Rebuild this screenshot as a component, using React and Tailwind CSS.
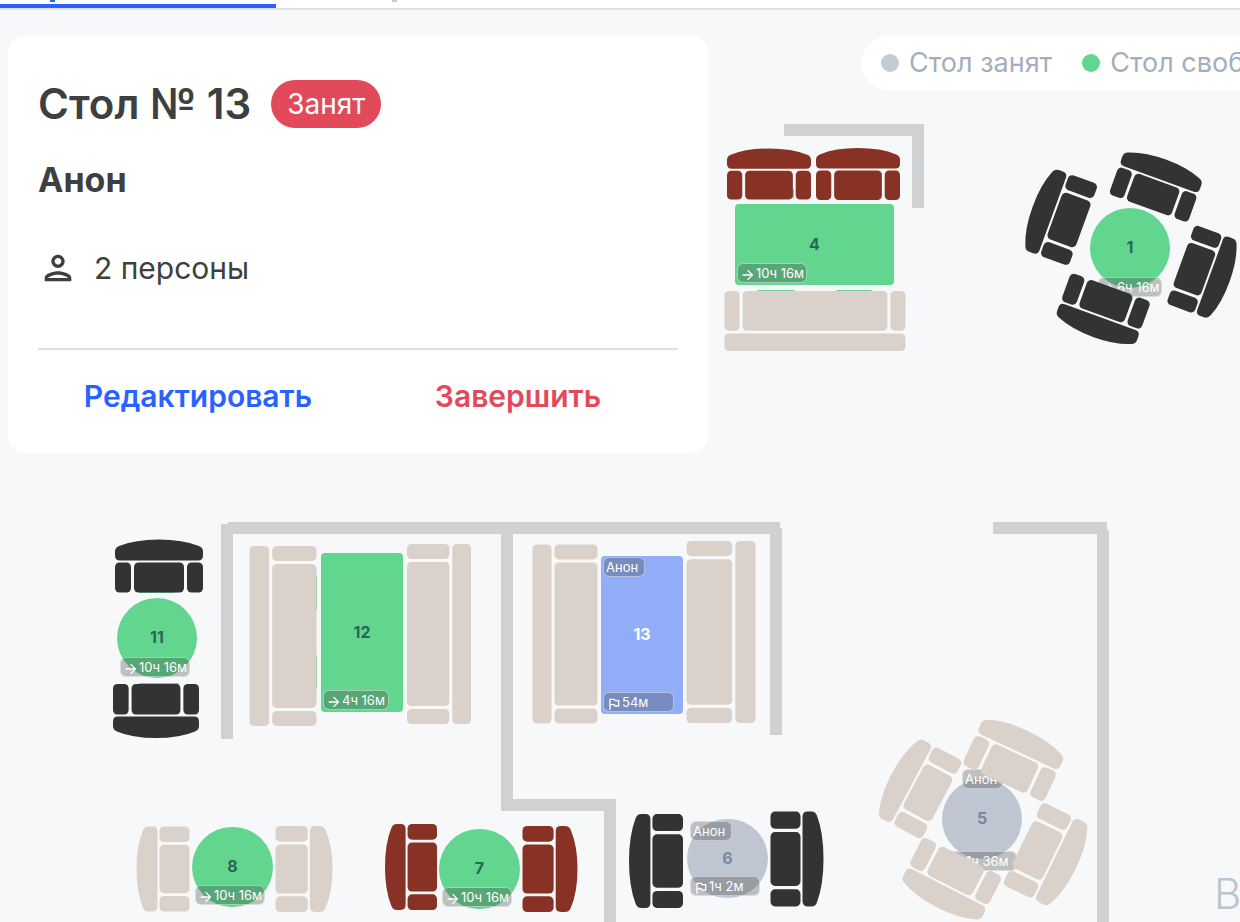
import React from "react";
import { MdArrowForward, MdOutlinedFlag, MdOutlinePerson } from "react-icons/md";

const BROWN = "#883225";
const DARK = "#333333";
const BEIGE = "#dad1cb";

const walls = [
  [784, 124, 140, 12],
  [912, 124, 12, 84],
  [221, 524, 12, 215],
  [228, 522, 552, 12],
  [501, 533, 12, 277],
  [501, 799, 115, 12],
  [604, 799, 12, 400],
  [770, 528, 12, 207],
  [993, 522, 114, 12],
  [1097, 530, 12, 700],
];

// places that peek out from under the furniture
const seats = [
  [785, 189, 9, 9],
  [757, 290, 38, 4],
  [836, 290, 36, 4],
  [139, 588, 36, 5],
  [139, 683, 40, 5],
  [310, 575, 7, 35],
  [310, 655, 7, 34],
  [407, 575, 7, 35],
  [407, 655, 7, 34],
];

const chairs = [
  { cx: 769, cy: 174, w: 84, h: 51, r: 0, color: BROWN },
  { cx: 858, cy: 174, w: 84, h: 52, r: 0, color: BROWN },
  { cx: 1157, cy: 184, w: 84, h: 52, r: 20, color: DARK },
  { cx: 1205, cy: 273, w: 84, h: 52, r: 110, color: DARK },
  { cx: 1102, cy: 312, w: 85, h: 53, r: 200, color: DARK },
  { cx: 1058, cy: 216, w: 87, h: 54, r: 290, color: DARK },
  { cx: 159, cy: 566, w: 88, h: 53, r: 0, color: DARK },
  { cx: 156, cy: 711, w: 86, h: 54, r: 180, color: DARK },
  { cx: 163, cy: 869, w: 85, h: 53, r: 270, color: BEIGE },
  { cx: 304, cy: 869, w: 86, h: 57, r: 90, color: BEIGE },
  { cx: 411, cy: 867, w: 86, h: 52, r: 270, color: BROWN },
  { cx: 550, cy: 869, w: 86, h: 55, r: 90, color: BROWN },
  { cx: 656, cy: 861, w: 94, h: 54, r: 270, color: DARK },
  { cx: 797, cy: 859, w: 95, h: 53, r: 90, color: DARK },
  { cx: 1015, cy: 757, w: 90, h: 58, r: 25, color: BEIGE },
  { cx: 1049, cy: 856, w: 92, h: 59, r: 116, color: BEIGE },
  { cx: 950, cy: 882, w: 89, h: 57, r: 207, color: BEIGE },
  { cx: 917, cy: 787, w: 89, h: 57, r: 298, color: BEIGE },
];

const sofas = [
  { cx: 815, cy: 321, w: 181, h: 60, r: 180 },
  { cx: 283, cy: 636, w: 180, h: 67, r: 270 },
  { cx: 439, cy: 634, w: 180, h: 64, r: 90 },
  { cx: 565, cy: 634, w: 179, h: 65, r: 270 },
  { cx: 721, cy: 632, w: 182, h: 69, r: 90 },
];

const tables = [
  { id: 4, x: 735, y: 204, w: 159, h: 81, status: "free", time: { text: "10ч 16м", x: 2, y: 59, w: 70 } },
  { id: 1, x: 1090, y: 208, w: 80, h: 80, round: true, status: "free", time: { text: "6ч 16м", x: 8, y: 69, w: 64 } },
  { id: 11, x: 117, y: 598, w: 80, h: 80, round: true, status: "free", time: { text: "10ч 16м", x: 3, y: 59, w: 70 } },
  { id: 12, x: 321, y: 553, w: 82, h: 159, status: "free", time: { text: "4ч 16м", x: 2, y: 137, w: 66 } },
  {
    id: 13, x: 601, y: 556, w: 82, h: 158, status: "active",
    guest: { text: "Анон", x: 2, y: 1, w: 42 },
    time: { text: "54м", flag: true, x: 2, y: 136, w: 71 },
  },
  { id: 8, x: 192, y: 827, w: 81, h: 80, round: true, status: "free", time: { text: "10ч 16м", x: 3, y: 58, w: 70 } },
  { id: 7, x: 439, y: 829, w: 81, h: 80, round: true, status: "free", time: { text: "10ч 16м", x: 3, y: 58, w: 70 } },
  {
    id: 6, x: 687, y: 819, w: 81, h: 79, round: true, status: "busy",
    guest: { text: "Анон", x: 3, y: 2, w: 42 },
    time: { text: "1ч 2м", flag: true, x: 3, y: 57, w: 70 },
  },
  {
    id: 5, x: 942, y: 779, w: 80, h: 80, round: true, status: "busy",
    guest: { text: "Анон", x: 20, y: -10, w: 41 },
    time: { text: "1ч 36м", flag: true, x: 5, y: 72, w: 70 },
  },
];

const statusStyles = {
  free: "bg-[#62d68f] text-[#276658]",
  busy: "bg-[#bfc6d1] text-[#7788a0]",
  active: "bg-[#91adf8] text-white",
};

function place({ cx, cy, w, h, r }, bw, bh) {
  return `translate(${cx} ${cy}) rotate(${r}) scale(${w / bw} ${h / bh}) translate(${-bw / 2} ${-bh / 2})`;
}

function Chair(props) {
  return (
    <g transform={place(props, 88, 53)} fill={props.color}>
      <path d="M0 16V12Q0 8 4 6.500Q20 0 44 0T84 6.500Q88 8 88 12V16Q88 21 83 21H5Q0 21 0 16Z" />
      <rect x="0" y="23" width="16" height="30" rx="4.500" />
      <rect x="19" y="23" width="50" height="30" rx="4.500" />
      <rect x="72" y="23" width="16" height="30" rx="4.500" />
    </g>
  );
}

function Sofa(props) {
  return (
    <g transform={place(props, 180, 65)} fill={BEIGE}>
      <rect x="0" y="0" width="180" height="19" rx="4.500" />
      <rect x="0" y="22" width="15" height="43" rx="4.500" />
      <rect x="18" y="22" width="144" height="43" rx="4.500" />
      <rect x="165" y="22" width="15" height="43" rx="4.500" />
    </g>
  );
}

function Tag({ tag, children }) {
  return (
    <span
      className="absolute flex h-5 items-center rounded-md border border-white/45 bg-[#424242]/31 pl-0.5 text-[13px] leading-4 font-normal whitespace-nowrap text-white"
      style={{ left: tag.x, top: tag.y, width: tag.w }}
    >
      {children}
      {tag.text}
    </span>
  );
}

function Table({ table }) {
  const { id, x, y, w, h, round, status, guest, time } = table;
  return (
    <button
      type="button"
      className={`absolute flex items-center justify-center pb-0.5 text-[16px] leading-5 font-bold ${
        round ? "rounded-full" : "rounded-sm"
      } ${statusStyles[status]}`}
      style={{ left: x, top: y, width: w, height: h }}
    >
      {id}
      {guest && <Tag tag={guest} />}
      <Tag tag={time}>
        {time.flag ? (
          <MdOutlinedFlag className="mt-1 size-4 shrink-0" />
        ) : (
          <MdArrowForward className="mt-1 size-4 shrink-0" />
        )}
      </Tag>
    </button>
  );
}

function FloorPlan() {
  return (
    <section className="absolute inset-0 overflow-hidden" aria-label="План зала">
      <svg className="absolute inset-0 size-full" aria-hidden="true">
        {walls.map(([x, y, w, h]) => (
          <rect key={`${x}-${y}-${w}`} x={x} y={y} width={w} height={h} fill="#cfd1d3" />
        ))}
        {seats.map(([x, y, w, h]) => (
          <rect key={`${x}-${y}`} x={x} y={y} width={w} height={h} rx="1" fill="#62d68f" />
        ))}
      </svg>
      {tables.map((table) => (
        <Table key={table.id} table={table} />
      ))}
      <svg className="pointer-events-none absolute inset-0 size-full" aria-hidden="true">
        {chairs.map((chair) => (
          <Chair key={`${chair.cx}-${chair.cy}`} {...chair} />
        ))}
        {sofas.map((sofa) => (
          <Sofa key={`${sofa.cx}-${sofa.cy}`} {...sofa} />
        ))}
      </svg>
      <span className="absolute top-[866px] left-[1214px] text-[42px] leading-14 font-light whitespace-nowrap text-[#bcc4cf]">
        Вход
      </span>
    </section>
  );
}

function Tabs() {
  return (
    <nav className="relative flex h-[10px] border-b-2 border-[#e0e0e0] bg-white">
      <button type="button" aria-label="План" className="flex h-2 w-[276px] items-start border-b-4 border-[#2962ff] pl-[50px]">
        <span className="h-[2px] w-[5px] bg-[#2962ff]" />
      </button>
      <button type="button" aria-label="Бронирования" className="flex h-2 w-[276px] items-start pl-[116px]">
        <span className="h-[2px] w-[5px] bg-[#c5cad4]" />
      </button>
    </nav>
  );
}

function TableCard() {
  return (
    <article className="w-[700px] shrink-0 rounded-2xl bg-white px-[30px] pt-11 pb-7 text-[#3e3f41]">
      <header className="flex items-center gap-5">
        <h1 className="text-[42px] leading-12 font-semibold">Стол № 13</h1>
        <span className="flex h-12 items-center rounded-full bg-[#e2495b] px-4 text-[28px] leading-8 font-normal text-white">
          Занят
        </span>
      </header>
      <h2 className="mt-8 text-[34px] leading-10 font-bold">Анон</h2>
      <p className="mt-12 flex h-10 items-center gap-4 text-[30px] leading-8 font-normal">
        <MdOutlinePerson className="size-10" />
        2 персоны
      </p>
      <div className="mt-[60px] grid grid-cols-2 border-t-2 border-[#e0e0e0] pt-5">
        <button type="button" className="h-[55px] pb-0.5 text-[30px] font-semibold text-[#2962ff]">
          Редактировать
        </button>
        <button type="button" className="h-[55px] pb-0.5 text-[30px] font-semibold text-[#e2495b]">
          Завершить
        </button>
      </div>
    </article>
  );
}

function Legend() {
  return (
    <ul className="ml-[153px] flex h-[54px] shrink-0 items-center gap-[30px] rounded-full bg-white px-5 text-[27px] leading-8 font-normal whitespace-nowrap text-[#a3afbc]">
      <li className="flex items-center gap-[10px]">
        <span className="size-[18px] rounded-full bg-[#c5cbd4]" />
        Стол занят
      </li>
      <li className="flex items-center gap-[10px]">
        <span className="size-[18px] rounded-full bg-[#62d68f]" />
        Стол свободен
      </li>
    </ul>
  );
}

export default function App() {
  return (
    <div className="relative min-h-screen overflow-hidden bg-[#f7f8fa] font-['Inter','Noto_Sans',sans-serif]">
      <FloorPlan />
      <Tabs />
      <main className="pointer-events-none relative flex items-start px-2 pt-[26px] *:pointer-events-auto">
        <TableCard />
        <Legend />
      </main>
    </div>
  );
}
